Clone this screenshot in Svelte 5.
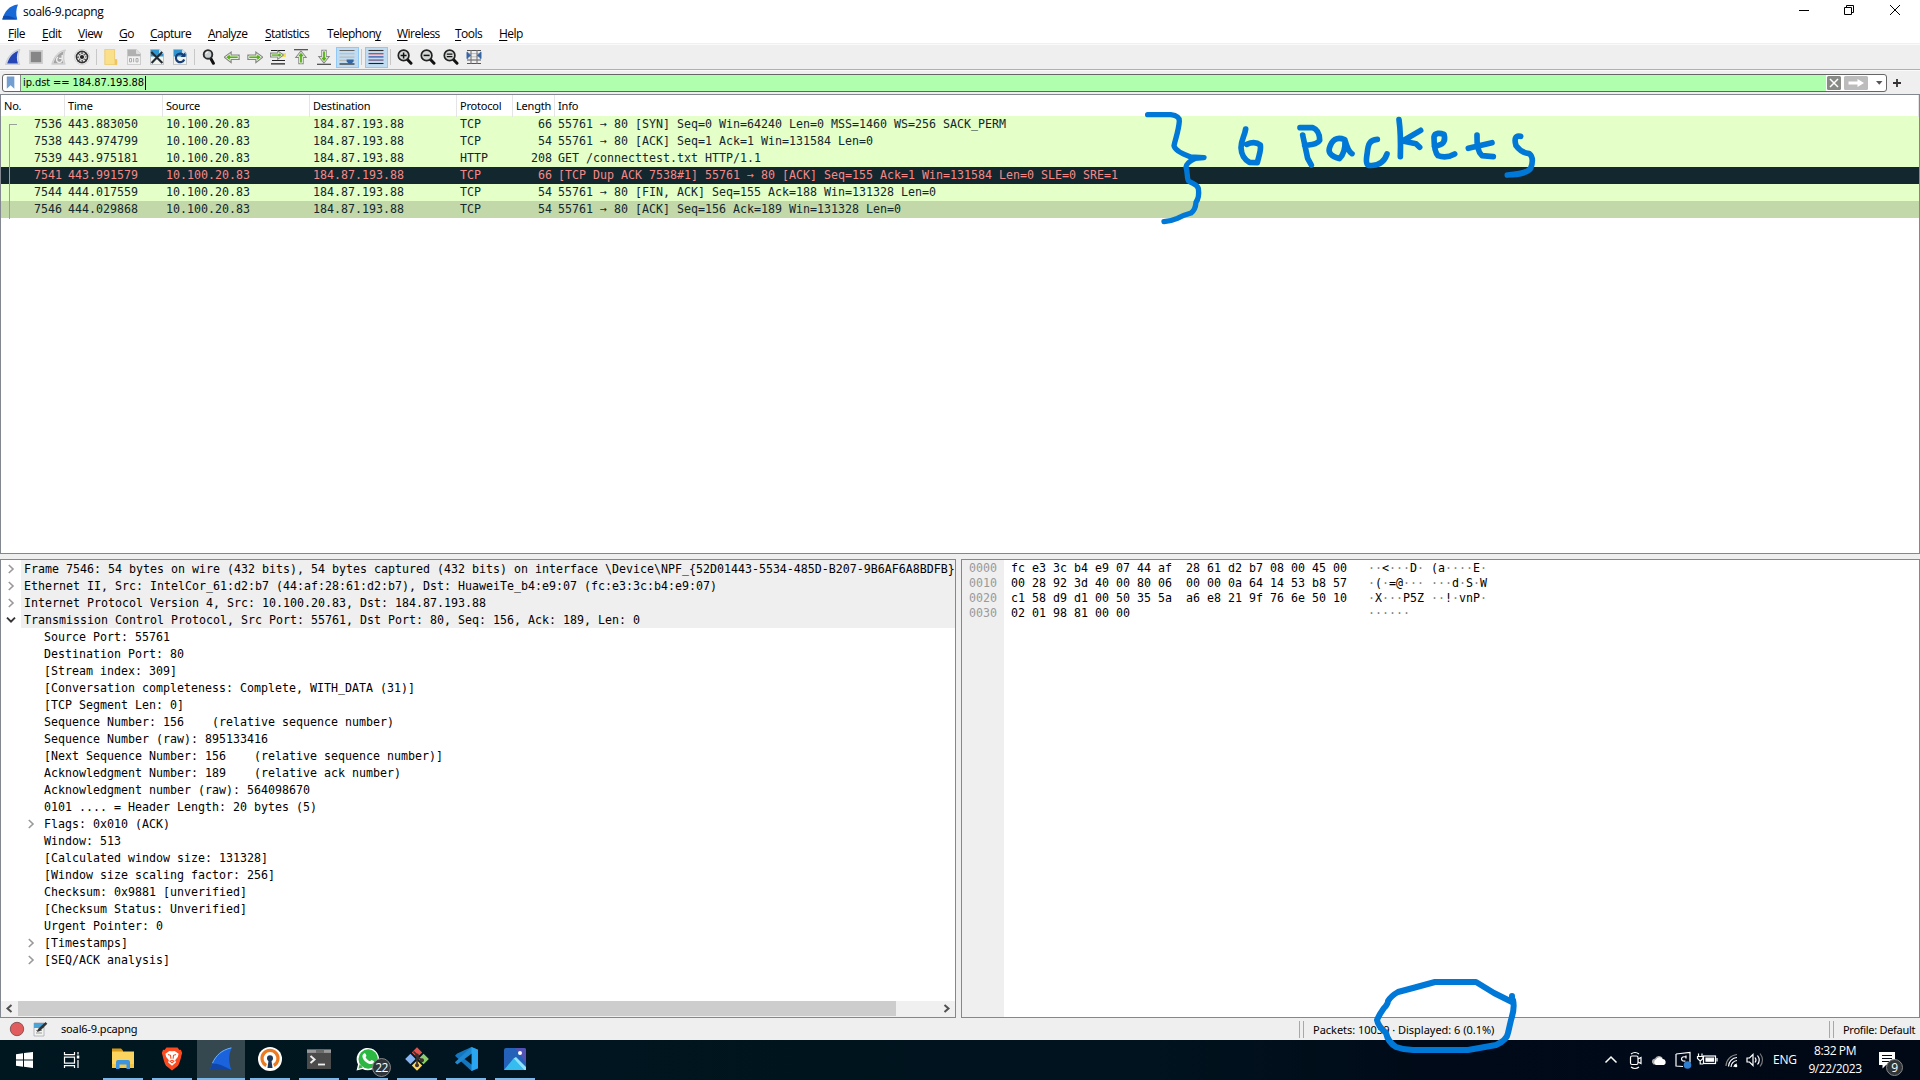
<script>
  const menus = [
    ['', 'F', 'ile', 18], ['', 'E', 'dit', 20], ['', 'V', 'iew', 25], ['', 'G', 'o', 15],
    ['', 'C', 'apture', 42], ['', 'A', 'nalyze', 41], ['', 'S', 'tatistics', 46],
    ['Telephon', 'y', '', 54], ['', 'W', 'ireless', 42], ['', 'T', 'ools', 28], ['', 'H', 'elp', 24]
  ];

  const tools = [
    'start', 'stop', 'restart', 'options', '|', 'open', 'save', 'close', 'reload', '|',
    'find', 'back', 'forward', 'goto', 'first', 'last', 'scroll', '|', 'color', '|',
    'zin', 'zout', 'zreset', 'resize'
  ];

  const packets = [
    ['7536', '443.883050', 'TCP', '66', '55761 → 80 [SYN] Seq=0 Win=64240 Len=0 MSS=1460 WS=256 SACK_PERM', ''],
    ['7538', '443.974799', 'TCP', '54', '55761 → 80 [ACK] Seq=1 Ack=1 Win=131584 Len=0', ''],
    ['7539', '443.975181', 'HTTP', '208', 'GET /connecttest.txt HTTP/1.1', ''],
    ['7541', '443.991579', 'TCP', '66', '[TCP Dup ACK 7538#1] 55761 → 80 [ACK] Seq=155 Ack=1 Win=131584 Len=0 SLE=0 SRE=1', 'bad'],
    ['7544', '444.017559', 'TCP', '54', '55761 → 80 [FIN, ACK] Seq=155 Ack=188 Win=131328 Len=0', ''],
    ['7546', '444.029868', 'TCP', '54', '55761 → 80 [ACK] Seq=156 Ack=189 Win=131328 Len=0', 'selected']
  ];

  // [arrow, text]: arrow is 'r' (collapsed), 'd' (expanded) or ''
  const layers = [
    ['r', 'Frame 7546: 54 bytes on wire (432 bits), 54 bytes captured (432 bits) on interface \\Device\\NPF_{52D01443-5534-485D-B207-9B6AF6A8BDFB}'],
    ['r', 'Ethernet II, Src: IntelCor_61:d2:b7 (44:af:28:61:d2:b7), Dst: HuaweiTe_b4:e9:07 (fc:e3:3c:b4:e9:07)'],
    ['r', 'Internet Protocol Version 4, Src: 10.100.20.83, Dst: 184.87.193.88'],
    ['d', 'Transmission Control Protocol, Src Port: 55761, Dst Port: 80, Seq: 156, Ack: 189, Len: 0']
  ];
  const fields = [
    ['', 'Source Port: 55761'],
    ['', 'Destination Port: 80'],
    ['', '[Stream index: 309]'],
    ['', '[Conversation completeness: Complete, WITH_DATA (31)]'],
    ['', '[TCP Segment Len: 0]'],
    ['', 'Sequence Number: 156    (relative sequence number)'],
    ['', 'Sequence Number (raw): 895133416'],
    ['', '[Next Sequence Number: 156    (relative sequence number)]'],
    ['', 'Acknowledgment Number: 189    (relative ack number)'],
    ['', 'Acknowledgment number (raw): 564098670'],
    ['', '0101 .... = Header Length: 20 bytes (5)'],
    ['r', 'Flags: 0x010 (ACK)'],
    ['', 'Window: 513'],
    ['', '[Calculated window size: 131328]'],
    ['', '[Window size scaling factor: 256]'],
    ['', 'Checksum: 0x9881 [unverified]'],
    ['', '[Checksum Status: Unverified]'],
    ['', 'Urgent Pointer: 0'],
    ['r', '[Timestamps]'],
    ['r', '[SEQ/ACK analysis]']
  ];

  const hex = [
    ['0000', 'fc e3 3c b4 e9 07 44 af  28 61 d2 b7 08 00 45 00', '··<···D· (a····E·'],
    ['0010', '00 28 92 3d 40 00 80 06  00 00 0a 64 14 53 b8 57', '·(·=@··· ···d·S·W'],
    ['0020', 'c1 58 d9 d1 00 50 35 5a  a6 e8 21 9f 76 6e 50 10', '·X···P5Z ··!·vnP·'],
    ['0030', '02 01 98 81 00 00', '······']
  ];

  const apps = ['explorer', 'brave', 'shark', 'openvpn', 'terminal', 'whatsapp', 'git', 'vscode', 'photos'];
</script>

{#snippet expander(kind)}
  <svg class="exp" width="10" height="10" viewBox="0 0 10 10">
    {#if kind === 'r'}
      <path d="M2.8 1 7 5 2.8 9" fill="none" stroke="#999" stroke-width="1.6" />
    {:else if kind === 'd'}
      <path d="M1 2.6 5 6.600 9 2.600" fill="none" stroke="#333" stroke-width="1.900" />
    {/if}
  </svg>
{/snippet}

{#snippet lens(kind)}
  <path d="M9.5 9.5 14 14.2" stroke="#111" stroke-width="3" stroke-linecap="round" />
  <circle cx="6.6" cy="6.4" r="5.3" fill="#d4d8d6" stroke="#222" stroke-width="1.7" />
  {#if kind === 'zin'}
    <path d="M3.6 6.4h6M6.6 3.4v6" stroke="#111" stroke-width="1.5" />
  {:else if kind === 'zout'}
    <path d="M3.6 6.4h6" stroke="#111" stroke-width="1.5" />
  {:else}
    <path d="M3.8 5.2h5.6M3.8 7.6h5.6" stroke="#111" stroke-width="1.2" />
  {/if}
{/snippet}

{#snippet toolIcon(name)}
  <svg width="16" height="16" viewBox="0 0 16 16">
    {#if name === 'start'}
      <path d="M.5 15.500C2.200 8.500 7 1.500 15 .5 13 5 12.600 10 14.700 15.500z" fill="#d9dde6" stroke="#b9bec9" stroke-width=".6" />
      <path d="M2.200 14.500C4 8.600 7.400 3.800 13.200 1.900 11.600 6 11.400 10.200 12.900 14.500z" fill="#2445b5" />
    {:else if name === 'stop'}
      <rect x="1" y="1" width="14" height="14" fill="#cfcfcf" /><rect x="2.8" y="2.8" width="10.4" height="10.4" fill="#868686" />
    {:else if name === 'restart'}
      <path d="M.8 15.2C2.5 8.5 7 2 14.4.9 12.6 5 12.2 10 14.2 15.2z" fill="#ddd" stroke="#bbb" stroke-width=".6" />
      <path d="M2.4 14.2C4.2 8.6 7.4 4.2 12.6 2.4 11.2 6.2 11 10.2 12.4 14.2z" fill="#a4a4a4" />
      <path d="M7 8.2a2.8 2.8 0 1 0 3.8 1M11.2 6v3.4H8" fill="none" stroke="#eee" stroke-width="1.4" />
    {:else if name === 'options'}
      <circle cx="8" cy="8" r="7.5" fill="#fff" stroke="#bbb" stroke-width=".6" />
      <circle cx="8" cy="8" r="6.4" fill="#333" /><circle cx="8" cy="8" r="4.100" fill="none" stroke="#eee" stroke-width="1.400" stroke-dasharray="2.3 .92" />
      <circle cx="8" cy="8" r="3" fill="#eee" /><circle cx="8" cy="8" r="2.100" fill="#222" />
    {:else if name === 'open'}
      <path d="M1.8.3h9.8v10.2h2.2v5.2H1.8z" fill="#fbe08a" stroke="#e9c35b" stroke-width=".7" /><path d="M11.6 10.5h2.4v5.2h-2.4z" fill="#eec65c" />
    {:else if name === 'save'}
      <path d="M1.5.4h9l4 4v11.2h-13z" fill="#f1f1f1" stroke="#bcbcbc" stroke-width=".7" /><path d="M1.8.7h8.5v4h4v2.6H1.8z" fill="#b0b0b0" />
      <path d="M10.5.4v4h4" fill="#ddd" />
      <path d="M3.5 9.5h2v3.4h-2zM10 9.5h2v3.4h-2zM7.6 9.2v4" fill="none" stroke="#aaa" />
    {:else if name === 'close' || name === 'reload'}
      <path d="M1.5.4h9l4 4v11.2h-13z" fill="#f2f5ee" stroke="#a8afb4" stroke-width=".7" /><path d="M1.8.7h8.5v4h4v2.8H1.8z" fill="#2f95cf" />
      <path d="M10.5.4v4h4" fill="#cfe6f2" />
      {#if name === 'close'}
        <path d="M2.3 3 13.4 14M13.2 3 2.6 14" stroke="#222a33" stroke-width="2.1" />
      {:else}
        <path d="M11.8 6.5a4.3 4.3 0 1 0 .4 4" fill="none" stroke="#173f7a" stroke-width="2.2" /><path d="M13.4 3v5H8.6z" fill="#173f7a" />
      {/if}
    {:else if name === 'find'}
      <path d="M9.200 8.600 12.400 14.300" stroke="#111" stroke-width="3" stroke-linecap="round" />
      <circle cx="7" cy="5.400" r="4.300" fill="#c9d0d2" stroke="#2d2d2d" stroke-width="1.900" /><path d="M4.800 5a2.300 2.300 0 0 1 2.400-2" fill="none" stroke="#fff" />
    {:else if name === 'back'}
      <path d="M1.2 8.2 6.6 4.2v2.4h8v3.4h-8v2.4z" fill="#53ad14" stroke="#858585" stroke-width="2.2" /><path d="M1.6 8.2 6.2 4.8v2.2h8v2.5h-8v2.2z" fill="#57b117" stroke="#f2f7ec" stroke-width=".9" />
    {:else if name === 'forward'}
      <path d="M14.8 8.2 9.4 4.2v2.4h-8v3.4h8v2.4z" fill="#53ad14" stroke="#858585" stroke-width="2.2" /><path d="M14.4 8.2 9.8 4.8v2.2h-8v2.5h8v2.2z" fill="#57b117" stroke="#f2f7ec" stroke-width=".9" />
    {:else if name === 'goto'}
      <path d="M1 1.5h14M2 11.5h13M1 14.8h14" stroke="#222" stroke-width="1.2" /><rect x="10" y="4" width="6" height="4" fill="#f5e05a" />
      <path d="M12.6 6 8.2 2.8v1.8H1v2.900h7.200v1.800z" fill="#53ad14" stroke="#858585" stroke-width="2" /><path d="M12.200 6 8.400 3.400V5H1.300v2.200h7.100v1.600z" fill="#57b117" stroke="#f2f7ec" stroke-width=".8" />
    {:else if name === 'first'}
      <path d="M1 .7h14" stroke="#444" stroke-width="1.2" /><path d="M8 2.6 3.6 8h2.6v6.4h3.6V8h2.6z" fill="#53ad14" stroke="#858585" stroke-width="1.8" /><path d="M8 3.2 4.4 7.6h2.2v6.4h2.8V7.6h2.2z" fill="#57b117" stroke="#f2f7ec" stroke-width=".9" />
    {:else if name === 'last'}
      <path d="M1 15.3h14" stroke="#444" stroke-width="1.2" /><path d="M8 13.4 3.6 8h2.6V1.6h3.6V8h2.6z" fill="#53ad14" stroke="#858585" stroke-width="1.8" /><path d="M8 12.8 4.4 8.4h2.2V2h2.8v6.4h2.2z" fill="#57b117" stroke="#f2f7ec" stroke-width=".9" />
    {:else if name === 'scroll'}
      <path d="M.5 4.800h15M.5 8.100h15M.5 11.400h15" stroke="#b9bcb6" stroke-width="1.100" /><path d="M.5 1.500h15" stroke="#666" /><path d="M.5 15h15" stroke="#222" stroke-width="1.200" />
      <path d="M7.600 10.600h7v1.900l-2.300 2.300H9.900l-2.300-2.300z" fill="#3465a4" />
    {:else if name === 'color'}
      <path d="M.5 1.5h15" stroke="#333" stroke-width="1.1" /><path d="M.5 4.7h15" stroke="#e33" stroke-width="1.3" /><path d="M.5 7.9h15" stroke="#3a58a8" stroke-width="1.3" /><path d="M.5 11.1h15" stroke="#735a80" stroke-width="1.3" /><path d="M.5 14.5h15" stroke="#222" stroke-width="1.1" />
    {:else if name === 'resize'}
      <path d="M1 1.5h14M1 14.5h14M1 11h14" stroke="#555" /><path d="M1 4.6h14M1 7.8h14" stroke="#bbb" /><path d="M5 1v14M11 1v14" stroke="#777" stroke-width="1.100" />
      <path d="M.8 3.200h1.200v1L5 6.200 2 8.600v1H.8zM15.200 3.200h-1.200v1l-3 2 3 2.400v1h1.200z" fill="#3465a4" stroke="#3465a4" stroke-width=".5" />
    {:else}
      {@render lens(name)}
    {/if}
  </svg>
{/snippet}

{#snippet appIcon(name)}
  <svg width="24" height="24" viewBox="0 0 24 24">
    {#if name === 'explorer'}
      <path d="M1 1.5h9l2 2v4H1z" fill="#d69a16" /><path d="M1 4.5h22V21H1z" fill="#fbd45f" /><path d="M1 17h22v4H1z" fill="#f5c646" />
      <path d="M5 22v-7q0-2 2-2h10q2 0 2 2v7h-3.5v-4.6h-7V22z" fill="#3b94dd" />
    {:else if name === 'brave'}
      <path d="M6.5.5h11l2 2.4 1.4-.1 1.3 3.2-.7 2.2c-1 4.3-2 8.3-3.5 10.5L12 23.5l-6-4.8C4.500 16.500 3.500 12.500 2.500 8.200L1.800 6l1.300-3.200 1.400.1z" fill="#fb4a20" />
      <path d="m12 4.300 2.600-.4 4 2.800-.8 3.300-2.700 3.200.9 2L12 18.700l-4-3.500.9-2L6.200 10l-.8-3.300 4-2.800z" fill="#fff" />
      <path d="M8 7.500l2.500.8.4 3.400M16 7.500l-2.500.8-.4 3.400M10 14.200l2-.9 2 .9-2 1.700z" fill="none" stroke="#fb4a20" stroke-width="1.100" />
    {:else if name === 'shark'}
      <path d="M1 23C3.500 12 10 2.500 23 .5 19.500 7 19 14.500 22.500 23z" fill="#1b63dc" />
      <path d="M1 23c.5-2 1.200-4 2.100-6 6-1 11 2 19.400 6z" fill="#0f46a8" /><path d="M3.500 16C7 8.500 12.500 3 22.300.9" fill="none" stroke="#6fb0f7" />
    {:else if name === 'openvpn'}
      <circle cx="12" cy="12" r="12" fill="#fff" /><path d="M8.200 18.500A8 8 0 1 1 15.800 18.500" fill="none" stroke="#ea7b22" stroke-width="3.200" />
      <circle cx="12" cy="11.200" r="3" fill="#1c3557" /><path d="M10.700 12h2.600l1.200 9h-5z" fill="#1c3557" />
    {:else if name === 'terminal'}
      <path d="M0 2.500h24V22H0z" fill="#4b4b4b" /><path d="M0 2.500h24v3.400H0z" fill="#9a9a9a" /><path d="M9 2.500h8v3.400H9z" fill="#6a6a6a" />
      <path d="m3.500 9 4 3.500-4 3.500" fill="none" stroke="#eee" stroke-width="2" /><path d="M11 17.500h7" stroke="#eee" stroke-width="1.800" />
    {:else if name === 'whatsapp'}
      <path d="M.5 23.500 2 17.500A11.200 11.200 0 1 1 6.500 22z" fill="#fff" /><circle cx="12.200" cy="12" r="9.700" fill="#2cb742" /><path d="m2.400 21.700 1.200-4.500 3.300 3.300z" fill="#2cb742" />
      <path d="M8 6.500c1-.8 1.600-.2 2.300 1.700.4 1-.6 1.400-.7 2 .9 1.900 2.200 3.100 4.300 4 .8 0 1-1.200 1.700-1.200 3 1.300 2.800 1.700 1.900 3-1.600 1.600-4 1.200-6.900-.6C7.800 13.700 6.200 11 6.400 9c.1-1 .8-2 1.600-2.500z" fill="#fff" />
    {:else if name === 'git'}
      <path d="m12 .2 5.200 5.200L12 10.600 6.800 5.400z" fill="#e1544f" /><path d="m5.400 6.800 5.200 5.200-5.200 5.200L.2 12z" fill="#88b4f2" />
      <path d="m18.600 6.800 5.200 5.200-5.200 5.200-5.200-5.200z" fill="#8ccf6c" /><path d="m12 13.400 5.200 5.200-5.200 5.200-5.200-5.200z" fill="#fbd75b" />
      <path d="M8.500 4.500 12 8v9.500M12 9.500l4.500 3.500" fill="none" stroke="#3b3030" stroke-width="1.700" /><circle cx="12" cy="18.300" r="2" fill="#3b3030" /><circle cx="17" cy="13.200" r="2" fill="#3b3030" /><circle cx="12" cy="8.400" r="1.900" fill="#3b3030" />
    {:else if name === 'vscode'}
      <path d="M17.500 0 24 2.800v18.400L17.500 24 1 8.800 3.200 6.600z" fill="#1377c0" /><path d="M17.500 24 1.100 15.300.9 17l2.200 1.200L18 6.800V0z" fill="#2190d6" opacity="0" />
      <path d="M17.500 0 .9 15.300l2.300 2.200L18.500 6z" fill="#1f8ad2" />
      <path d="M17.500 0 24 2.800v18.400L17.500 24z" fill="#2aa5ef" /><path d="M17.500 6.800v10.600L10.600 12z" fill="#001720" />
    {:else}
      <path d="M3 1h18q2 0 2 2v20H1V3q0-2 2-2z" fill="#2362b8" /><path d="M12 1h9q2 0 2 2v13z" fill="#5452b4" /><path d="m1 23 9.500-11.500L21 23z" fill="#35bdf0" /><path d="m10.500 11.500 2.500-1.500L23 20v3h-2z" fill="#8ce2fa" /><circle cx="17" cy="6" r="2" fill="#fff" />
    {/if}
  </svg>
{/snippet}

<div class="screen">
  <header class="titlebar">
    <svg width="18" height="16" viewBox="0 0 18 16"><path d="M.3 15.500C2.500 7.500 7 1.500 16 .5 14 5 13.700 10 15.300 15.500z" fill="#1769d8" /><path d="M.3 15.500 1.500 12c5-.7 9 .8 13.600 3.500z" fill="#0e4bb0" /></svg>
    <span class="title">soal6-9.pcapng</span>
    <svg class="winctl" width="104" height="12" viewBox="0 0 104 12" fill="none" stroke="#000">
      <path d="M1 6.500h10" /><path d="M46.500 3.500h7v7h-7zM48.500 3.500v-2h7v7h-2" /><path d="m92 1 10 10M102 1 92 11" />
    </svg>
  </header>

  <nav class="menubar">
    {#each menus as [pre, key, post, w]}
      <span style:width="{w}px">{pre}<u>{key}</u>{post}</span>
    {/each}
  </nav>

  <div class="toolbar">
    {#each tools as t}
      {#if t === '|'}
        <i class="sep"></i>
      {:else}
        <button class:on={t === 'scroll' || t === 'color'} aria-label={t}>{@render toolIcon(t)}</button>
      {/if}
    {/each}
  </div>

  <div class="filterbar">
    <div class="filter">
      <svg class="bm" width="18" height="16" viewBox="0 0 18 16"><path d="M4 1h8v13l-4-3.500L4 14z" fill="#729fcf" /></svg>
      <div class="expr">ip.dst == 184.87.193.88<i class="caret"></i></div>
      <svg width="60" height="16" viewBox="0 0 60 16">
        <rect x="1" y="1" width="14" height="14" rx="1.500" fill="#888a85" /><path d="m4 4 8 8M12 4l-8 8" stroke="#fff" stroke-width="1.500" />
        <rect x="18" y="1" width="24" height="14" rx="1.500" fill="#bcbcbc" /><path d="M22.500 6.500h9V4l6.500 4-6.500 4V9.500h-9z" fill="#fff" />
        <path d="M50 6h6.500l-3.200 3.800z" fill="#555" />
      </svg>
    </div>
    <svg class="plus" width="10" height="10" viewBox="0 0 10 10"><path d="M1 5h8M5 1v8" stroke="#333" stroke-width="1.800" /></svg>
  </div>

  <section class="list">
    <div class="row head">
      <span>No.</span><span>Time</span><span>Source</span><span>Destination</span><span>Protocol</span><span>Length</span><span>Info</span>
    </div>
    {#each packets as [no, time, proto, len, info, kind]}
      <div class="row {kind}">
        <span class="num">{no}</span><span>{time}</span><span>10.100.20.83</span><span>184.87.193.88</span><span>{proto}</span><span class="num">{len}</span><span>{info}</span>
      </div>
    {/each}
    <i class="thread"></i>
  </section>

  <div class="panes">
    <section class="details">
      {#each layers as [arrow, text]}
        <div class="node">{@render expander(arrow)}<span class="layer">{text}</span></div>
      {/each}
      {#each fields as [arrow, text]}
        <div class="node sub">{@render expander(arrow)}<span>{text}</span></div>
      {/each}
      <div class="hscroll">
        <svg width="17" height="15" viewBox="0 0 17 15"><path d="M10.500 4 6.500 7.500l4 3.500" fill="none" stroke="#505050" stroke-width="2" /></svg>
        <i class="thumb"></i>
        <svg width="17" height="15" viewBox="0 0 17 15"><path d="M6.500 4l4 3.500-4 3.500" fill="none" stroke="#505050" stroke-width="2" /></svg>
      </div>
    </section>
    <section class="bytes">
      {#each hex as [off, data, ascii]}
        <div class="hexrow"><span class="off">{off}</span><span class="data">{data}</span><span>{#each ascii as ch}{#if ch === '·'}<b>·</b>{:else}{ch}{/if}{/each}</span></div>
      {/each}
    </section>
  </div>

  <footer class="status">
    <svg width="16" height="16" viewBox="0 0 16 16"><circle cx="8" cy="8" r="6.700" fill="#e15c5c" stroke="#8d5555" /></svg>
    <svg class="note" width="16" height="16" viewBox="0 0 16 16"><path d="M2 2h10v13H2z" fill="#f2f4f0" stroke="#aab" stroke-width=".8" /><path d="M2 2h10v5H2z" fill="#4ba3d6" /><path d="M4 9.500h6M4 12h6" stroke="#999" /><path d="m5 11 1-3 7.500-7 1.800 1.700L8 10z" fill="#333" /></svg>
    <span class="file">soal6-9.pcapng</span>
    <span class="cell packets">Packets: 10039 <em>·</em> Displayed: 6 (0.1%)</span>
    <span class="cell profile">Profile: Default</span>
  </footer>

  <div class="taskbar">
    <div class="sys">
      <svg width="17" height="16" viewBox="0 0 17 16" fill="#fff"><path d="M0 2.200 7 1.200v6.300H0zM8 1 17 0v7.500H8zM0 8.500h7v6.300l-7-1zM8 8.500h9V16l-9-1.200z" /></svg>
    </div>
    <div class="sys">
      <svg width="18" height="16" viewBox="0 0 18 16" fill="none" stroke="#fff" stroke-width="1.200"><path d="M1.500 0v2.600h10V0M1.500 5.200h10v6h-10zM1.500 16v-2.400h10V16M15 0v2.500M15 8v8" /><path d="M13.800 3.500h2.500v3h-2.500z" fill="#fff" stroke="none" /></svg>
    </div>
    {#each apps as a}
      <div class="app {a}">
        {@render appIcon(a)}
        {#if a === 'whatsapp'}<span class="count">22</span>{/if}
      </div>
    {/each}
    <div class="tray">
      <svg width="190" height="20" viewBox="0 0 190 20" fill="none" stroke="#fff" stroke-width="1.200">
        <path d="m5.500 12.500 5.500-5.500 5.500 5.500" stroke-width="1.500" />
        <path d="M31 4q4-3 8 0M31 17q4 3 8 0" /><rect x="30.500" y="6" width="7.500" height="8.500" rx="1.500" /><path d="m38 9 3-1.500v6L38 12" />
        <path d="M52 12.500a3.500 3.500 0 0 1 3-4 4.500 4.500 0 0 1 7.500-.8l-4 6.800h-5z" fill="#aaa" stroke="none" /><path d="M56 15a3 3 0 0 1 0-5.500 4 4 0 0 1 7-.5 3.200 3.200 0 0 1 1 6z" fill="#fff" stroke="none" />
        <path d="m76 4 14-1.500v10M76 4v12l7 .5" /><path d="M86 7q-4-1-4.500 1.800 0 2.700 4 2.200M86 5.500v3" /><circle cx="87.500" cy="15" r="3.800" fill="#2f7fd0" stroke="none" />
        <rect x="103.500" y="6" width="12" height="7.500" /><path d="M106 8.200h7.500v3H106z" fill="#fff" /><path d="M117 8v3.500M98.500 3.500v3M102 3.500v3M97.500 6.500h5.500v2l-2 2h-1.500l-2-2zM100.200 10v4h3" />
        <path d="M126 16A12 12 0 0 1 137 4.500" stroke="#888" /><path d="M128.500 16.500a9 9 0 0 1 8.500-9M131 17a6.500 6.500 0 0 1 6-6.500M134 17a3.500 3.500 0 0 1 3-3" /><circle cx="136" cy="16" r="1.300" fill="#fff" stroke="none" />
        <path d="M147 8h2.500l3.500-3.500v11L149.500 12H147zM155 7.500q2 2.500 0 5M157.500 5.500q3.500 4.500 0 9" /><path d="M160 3.500q5 6.500 0 13" stroke="#777" />
      </svg>
      <span class="lang">ENG</span>
      <span class="clock"><span>8:32 PM</span><span>9/22/2023</span></span>
      <span class="notif">
        <svg width="16" height="17" viewBox="0 0 16 17"><path d="M0 0h16v13H7l-3.500 3.500V13H0z" fill="#fff" /><path d="M3 3.500h10M3 6.500h10M3 9.500h7" stroke="#010816" stroke-width="1.200" /></svg>
        <span class="count">9</span>
      </span>
    </div>
  </div>

  <svg class="ink" width="1920" height="1080" viewBox="0 0 1920 1080">
    <g transform="translate(1130 95) scale(.33333)" stroke-width="17">
      <path stroke-width="16" d="M53 59H122Q148 62 148 78C146 108 136 132 132 152 134 166 160 178 182 186L222 188 196 190C180 198 168 206 168 216 174 236 170 252 176 258 186 266 200 266 205 280 208 300 206 310 198 322 197 336 194 346 183 354 168 358 154 364 142 370 126 377 112 379 102 380" />
      <path d="M347 102C344 124 333 134 333 158 334 180 344 194 358 202L382 203C387 180 394 166 391 150 378 140 364 142 350 148" />
      <path d="M510 98H548C564 104 569 118 569 136 562 148 546 148 524 152M518 120C524 148 530 176 533 190L544 210" />
      <path d="M644 134C620 124 606 134 598 160 594 176 606 184 628 191 640 180 646 160 645 136 652 160 658 172 666 176" />
      <path d="M742 133C718 134 714 150 712 172 708 196 708 208 716 211 740 214 762 204 771 177" />
      <path d="M807 74C812 110 812 150 811 185M872 106 818 138 858 146 869 157" />
      <path d="M913 154C940 150 948 140 942 118 932 114 914 112 912 126 912 150 914 172 924 182 940 188 958 186 974 177" />
      <path d="M1041 120C1040 150 1044 172 1056 182L1090 185M1015 160 1086 143" />
      <path d="M1172 124C1156 120 1152 132 1158 152 1168 166 1180 174 1198 176 1210 186 1208 204 1202 220 1192 234 1168 238 1132 240" />
    </g>
    <path stroke-width="6" d="M1512 996V1002L1494 993 1476 982H1435L1413 988 1398 992Q1391 996 1388 1001 1388 1004 1384 1008 1379 1015 1377 1020 1378 1026 1386 1033 1388 1042 1396 1047 1404 1050 1413 1050H1468L1496 1045Q1507 1040 1508 1033L1511 1020Q1515 1008 1513 1000" />
  </svg>
</div>

<style>
  :global(body) { margin: 0; overflow: hidden; }
  .screen {
    width: 1920px; height: 1080px; position: relative; display: flex; flex-direction: column;
    background: #efefef; color: #000; font: 11px/14px "Noto Sans", sans-serif; overflow: hidden; box-sizing: border-box;
  }
  .screen :global(svg) { display: block; flex: none; }
  i, em { font-style: normal; }
  .titlebar { height: 24px; flex: none; background: #fff; display: flex; align-items: center; padding: 0 18px 0 2px; box-sizing: border-box; }
  .title { margin-left: 3px; flex: 1; font: 12px/24px "Open Sans", sans-serif; letter-spacing: -.27px; }
  .winctl { margin-bottom: 4px; }
  .menubar { height: 19px; flex: none; background: #fff; display: flex; gap: 16px; padding-left: 8px; border-bottom: 1px solid #f0f0f0; font: 12px/19px "Open Sans", sans-serif; letter-spacing: -.52px; white-space: nowrap; }
  .menubar u { text-underline-offset: 2px; text-decoration-thickness: 1px; text-decoration-skip-ink: none; }
  .toolbar { flex: none; border-bottom: 1px solid #b0b0b0; border-top: 1px solid #fafafa; box-sizing: border-box; height: 26px; display: flex; align-items: center; padding-left: 1.5px; }
  .toolbar button { width: 23px; height: 21px; border: 0; background: none; padding: 0; display: flex; align-items: center; justify-content: center; }
  .toolbar button.on { background: #c0dcf3; box-shadow: inset 0 0 0 1px #90c8f6; }
  .sep { width: 1px; height: 16px; background: #c8c8c8; margin: 0 2.5px; }
  .filterbar { height: 24px; flex: none; display: flex; align-items: center; padding-left: 2px; border-top: 1px solid #fafafa; box-sizing: border-box; }
  .filter { width: 1885px; height: 18px; box-sizing: border-box; border: 1px solid #666; border-radius: 3px; background: #fff; display: flex; overflow: hidden; }
  .bm { border-right: 1px solid #888; width: 17px; }
  .expr { flex: 1; background: #afffaf; line-height: 17px; padding-left: 2px; display: flex; align-items: center; font-family: "DejaVu Sans Condensed", "DejaVu Sans", sans-serif; font-stretch: condensed; letter-spacing: -.08px; font-size: 11px; white-space: pre; }
  .caret { width: 1px; height: 14px; background: #000; margin-left: 1px; }
  .plus { margin-left: 5px; }
  .list { height: 460px; flex: none; position: relative; box-sizing: border-box; border: 1px solid #828790; background: #fff; font: 11.63px/17px "DejaVu Sans Mono", monospace; }
  .row { height: 17px; display: grid; grid-template-columns: 64px 98px 147px 147px 56px 42px 1fr; background: #e4ffc7; color: #12272e; white-space: pre; }
  .row span { padding: 0 1px 0 3px; }
  .row .num { text-align: right; padding-right: 3px; }
  .row.head { height: 21px; background: #fff; color: #000; font: 11px/22px "Noto Sans", sans-serif; letter-spacing: -.2px; }
  .row.head span { border-right: 1px solid #e5e5e5; }
  .row.bad { background: #12272e; color: #f78787; }
  .row.selected { background: #c2d8a9; }
  .thread { position: absolute; left: 8px; top: 29px; width: 7px; height: 94px; border: solid #9a9f9a; border-width: 1px 0 0 1px; }
  .panes { height: 459px; flex: none; margin-top: 5px; display: flex; gap: 5px; font: 11.63px/17px "DejaVu Sans Mono", monospace; }
  .details { width: 956px; box-sizing: border-box; border: 1px solid #828790; background: #fff; display: flex; flex-direction: column; overflow: hidden; }
  .node { height: 17px; flex: none; display: flex; align-items: center; padding-left: 5px; white-space: pre; }
  .node span { padding-left: 3px; height: 17px; line-height: 19px; }
  .node .layer { background: #efefef; flex: 1; margin-left: 5px; }
  .node.sub { padding-left: 25px; }
  .node.sub span { margin-left: 5px; }
  .hscroll { margin-top: auto; height: 16px; flex: none; background: #f0f0f0; display: flex; }
  .thumb { width: 878px; height: 15px; background: #cdcdcd; margin-right: auto; }
  .bytes { flex: 1; box-sizing: border-box; border: 1px solid #828790; background: linear-gradient(90deg, #efefef 42px, #fff 42px); padding-top: 1px; }
  .hexrow { height: 15px; line-height: 15px; display: flex; white-space: pre; }
  .off { width: 42px; padding-left: 7px; box-sizing: border-box; color: #9a9a9a; }
  .data { width: 350px; padding-left: 7px; margin-right: 7px; }
  .hexrow b { font-weight: 400; color: #808080; }
  .status { height: 22px; flex: none; display: flex; align-items: center; padding-left: 9px; letter-spacing: -.3px; line-height: 22px; white-space: pre; }
  .note { margin-left: 7px; }
  .file { margin-left: 13px; flex: 1; line-height: 24px; letter-spacing: -.15px; }
  .cell { height: 17px; line-height: 18px; box-sizing: border-box; padding-left: 14px; background: linear-gradient(#a8a8a8, #a8a8a8) 0 0 / 1px 100% no-repeat, linear-gradient(#a8a8a8, #a8a8a8) 4px 0 / 1px 100% no-repeat; }
  .packets { width: 530px; letter-spacing: -.02px; }
  .profile { width: 91px; }
  .taskbar { height: 40px; flex: none; background: linear-gradient(90deg, #001720, #00131e 60%, #000a18 75%, #010816); display: flex; color: #fff; }
  .sys { width: 48px; display: flex; align-items: center; justify-content: center; }
  .app { width: 40px; margin-left: 9px; position: relative; display: flex; align-items: center; justify-content: center; border-bottom: 2px solid #76b9ed; box-sizing: border-box; height: 40px; }
  .explorer { margin-left: 7px; }
  .shark { width: 48px; margin: 0 -4px 0 5px; background: #354850; }
  .count { position: absolute; right: -3px; bottom: 1px; width: 17px; height: 17px; border-radius: 50%; background: #2f3539; border: 1px solid #888; font: 12px/17px "Open Sans", sans-serif; letter-spacing: -.5px; text-align: center; }
  .tray { margin-left: auto; display: flex; align-items: center; width: 320px; box-sizing: border-box; }
  .lang { font: 12px/20px "Open Sans", sans-serif; width: 30px; margin-left: -17px; letter-spacing: -.2px; }
  .clock { width: 64px; display: flex; flex-direction: column; text-align: center; font: 12px/18px "Open Sans", sans-serif; letter-spacing: -.4px; }
  .notif { position: relative; margin-left: 12px; }
  .notif .count { right: -8px; bottom: -7px; width: 15px; height: 15px; line-height: 15px; }
  .ink { position: absolute; left: 0; top: 0; fill: none; stroke: #0078d7; stroke-linecap: round; stroke-linejoin: round; pointer-events: none; }
</style>
